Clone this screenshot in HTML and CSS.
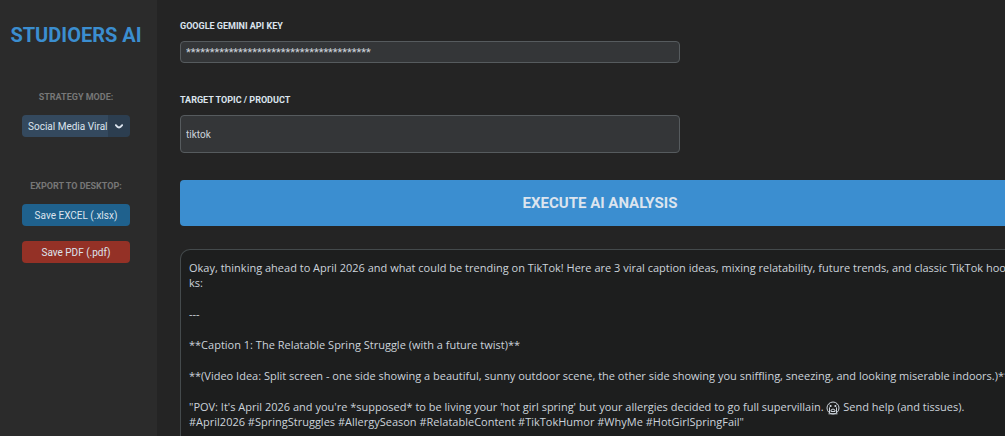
FILE: index.html
```html
<!DOCTYPE html>
<html lang="en">
<head>
    <meta charset="UTF-8">
    <title>Studioers AI</title>
    <link rel="stylesheet" href="styles.css">
</head>
<body>
    <aside class="sidebar">
        <h1>STUDIOERS AI</h1>
        <label class="side-label" for="mode">STRATEGY MODE:</label>
        <div class="select-wrap">
            <select id="mode">
                <option>Social Media Viral</option>
            </select>
            <svg class="chevron" viewBox="0 0 8 5"><path d="M1 1.2 Q2.5 3.4 4 3.4 Q5.5 3.4 7 1.2"/></svg>
        </div>
        <p class="side-label">EXPORT TO DESKTOP:</p>
        <button type="button" class="btn btn-excel">Save EXCEL (.xlsx)</button>
        <button type="button" class="btn btn-pdf">Save PDF (.pdf)</button>
    </aside>

    <main class="main">
        <div class="form-group">
            <label for="apiKey">GOOGLE GEMINI API KEY</label>
            <input type="text" id="apiKey" class="key-input" value="***************************************">
        </div>
        <div class="form-group">
            <label for="topic">TARGET TOPIC / PRODUCT</label>
            <input type="text" id="topic" class="topic-input" value="tiktok">
        </div>
        <button type="button" class="btn-run">EXECUTE AI ANALYSIS</button>
        <div class="output">
            <p>Okay, thinking ahead to April 2026 and what could be trending on TikTok! Here are 3 viral caption ideas, mixing relatability, future trends, and classic TikTok hoo<br>ks:</p>
            <p>---</p>
            <p>**Caption 1: The Relatable Spring Struggle (with a future twist)**</p>
            <p>**(Video Idea: Split screen - one side showing a beautiful, sunny outdoor scene, the other side showing you sniffling, sneezing, and looking miserable indoors.)**</p>
            <p>"POV: It's April 2026 and you're *supposed* to be living your 'hot girl spring' but your allergies decided to go full supervillain. <svg class="emoji" viewBox="0 0 14 14"><circle cx="7" cy="7" r="6"/><path d="M3.5 4 L5.5 5 L3.5 6 M10.5 4 L8.5 5 L10.5 6 M3.5 6.5 V12 M10.5 6.5 V12 M5 10.5 V9 Q7 7 9 9 V10.5 Z M2.5 12.8 H11.5"/></svg> Send help (and tissues).<br>#April2026 #SpringStruggles #AllergySeason #RelatableContent #TikTokHumor #WhyMe #HotGirlSpringFail"</p>
        </div>
    </main>
</body>
</html>
```
FILE: styles.css
```css
* {
    box-sizing: border-box;
}
body {
    margin: 0;
    display: flex;
    height: 100vh;
    overflow: hidden;
    background: #242424;
    color: #dce4ee;
    font-family: Roboto, sans-serif;
    font-size: 10px;
}
.sidebar {
    flex: 0 0 157px;
    display: flex;
    flex-direction: column;
    padding: 23px 27px 0 22px;
    background: #2b2b2b;
}
h1 {
    margin: 0 -20px 45px;
    font-size: 20px;
    line-height: 24px;
    text-align: center;
    white-space: nowrap;
    color: #3b8ed0;
}
.side-label {
    margin: 0 0 12px;
    font-size: 9px;
    font-weight: bold;
    line-height: 11px;
    text-align: center;
    color: #777;
}
.select-wrap {
    position: relative;
    margin-bottom: 44px;
}
select {
    display: block;
    width: 100%;
    height: 22px;
    padding: 0 0 0 6px;
    border: none;
    border-radius: 4px;
    appearance: none;
    background: linear-gradient(to left, #2c3e50 22px, #34495e 22px);
    color: #dce4ee;
    font: 10px Roboto, sans-serif;
}
.chevron {
    position: absolute;
    right: 7px;
    top: 9px;
    width: 8px;
    height: 5px;
    fill: none;
    stroke: #dce4ee;
    stroke-width: 2;
    stroke-linecap: round;
    pointer-events: none;
}
.btn {
    height: 22px;
    margin-bottom: 15px;
    padding: 0;
    border: none;
    border-radius: 4px;
    color: #dce4ee;
    font: 10px Roboto, sans-serif;
    cursor: pointer;
}
.btn-excel {
    background: #1f618d;
}
.btn-pdf {
    background: #943126;
}
.main {
    flex: 1;
    display: flex;
    flex-direction: column;
    min-width: 0;
    margin-right: -15px;
    padding: 20px 0 0 23px;
}
.form-group label {
    display: block;
    margin-bottom: 9px;
    font-size: 9px;
    font-weight: bold;
    line-height: 12px;
}
.form-group input {
    display: block;
    width: 500px;
    max-width: 100%;
    padding: 0 5px;
    border: 1px solid #565b5e;
    border-radius: 4px;
    background: #343638;
    color: #ccd3db;
    font: 10px Roboto, sans-serif;
}
.form-group .key-input {
    height: 22px;
    margin-bottom: 31px;
    font-size: 11px;
}
.form-group .topic-input {
    height: 38px;
    margin-bottom: 27px;
}
.btn-run {
    flex: none;
    height: 46px;
    margin-bottom: 23px;
    border: none;
    border-radius: 4px;
    background: #3b8ed0;
    color: #dce4ee;
    font: bold 15px Roboto, sans-serif;
    cursor: pointer;
}
.output {
    flex: 1;
    padding: 10px 8px 0;
    border: 1px solid #444a4c;
    border-bottom: none;
    border-radius: 10px 10px 0 0;
    background: #1d1e1e;
    color: #ccd3db;
    font-family: "Open Sans", "Noto Sans", sans-serif;
    font-size: 11px;
    line-height: 15px;
    white-space: nowrap;
}
.output p {
    margin: 0 0 16px;
}
.output p:last-child {
    margin-bottom: 0;
}
.emoji {
    width: 14px;
    height: 14px;
    margin: -2px 0;
    vertical-align: -2px;
    fill: none;
    stroke: #ccd3db;
    stroke-width: 1;
}
```
